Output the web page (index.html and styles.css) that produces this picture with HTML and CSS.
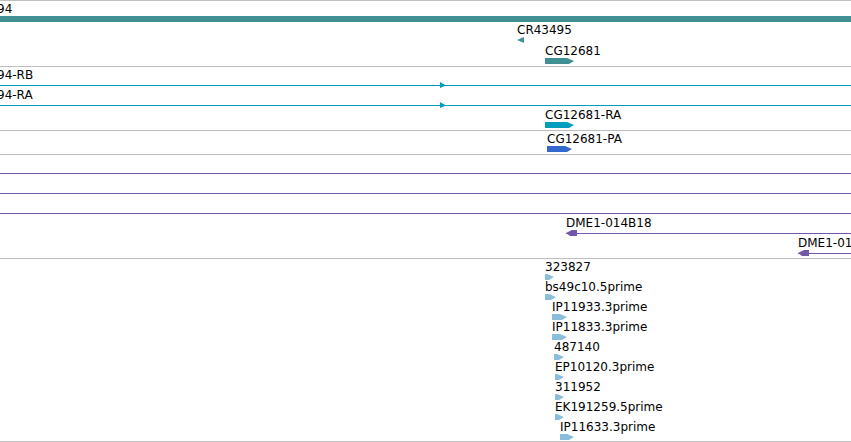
FILE: index.html
```
<!DOCTYPE html>
<html lang="en">
<head>
<meta charset="utf-8">
<title>Genome browser</title>
<link rel="stylesheet" href="styles.css">
</head>
<body>
<main class="browser">
  <section class="track genes">
    <div class="feature" style="--x:-3px"><span class="label">94</span><div class="strip bar"></div></div>
    <div class="feature" style="--x:517px"><span class="label">CR43495</span><div class="strip"><i class="glyph small-left" style="--w:7px"></i></div></div>
    <div class="feature" style="--x:545px"><span class="label">CG12681</span><div class="strip"><i class="glyph right" style="--w:29px"></i></div></div>
  </section>
  <section class="track transcripts">
    <div class="feature" style="--x:-3px"><span class="label">94-RB</span><div class="strip line"><i class="glyph tip" style="--at:443px"></i></div></div>
    <div class="feature" style="--x:-3px"><span class="label">94-RA</span><div class="strip line"><i class="glyph tip" style="--at:443px"></i></div></div>
    <div class="feature" style="--x:545px"><span class="label">CG12681-RA</span><div class="strip"><i class="glyph right" style="--w:29px"></i></div></div>
  </section>
  <section class="track proteins">
    <div class="feature" style="--x:547px"><span class="label">CG12681-PA</span><div class="strip"><i class="glyph right" style="--w:25px"></i></div></div>
  </section>
  <section class="track clones">
    <div class="feature"><span class="label"></span><div class="strip line"></div></div>
    <div class="feature"><span class="label"></span><div class="strip line"></div></div>
    <div class="feature"><span class="label"></span><div class="strip line"></div></div>
    <div class="feature" style="--x:566px"><span class="label">DME1-014B18</span><div class="strip line"><i class="glyph left" style="--w:11px"></i></div></div>
    <div class="feature" style="--x:798px"><span class="label">DME1-014B19</span><div class="strip line"><i class="glyph left" style="--w:11px"></i></div></div>
  </section>
  <section class="track ests">
    <div class="feature" style="--x:545px"><span class="label">323827</span><div class="strip"><i class="glyph right" style="--w:9px"></i></div></div>
    <div class="feature" style="--x:545px"><span class="label">bs49c10.5prime</span><div class="strip"><i class="glyph right" style="--w:11px"></i></div></div>
    <div class="feature" style="--x:552px"><span class="label">IP11933.3prime</span><div class="strip"><i class="glyph right" style="--w:15px"></i></div></div>
    <div class="feature" style="--x:552px"><span class="label">IP11833.3prime</span><div class="strip"><i class="glyph right" style="--w:15px"></i></div></div>
    <div class="feature" style="--x:554px"><span class="label">487140</span><div class="strip"><i class="glyph right" style="--w:10px"></i></div></div>
    <div class="feature" style="--x:555px"><span class="label">EP10120.3prime</span><div class="strip"><i class="glyph right" style="--w:9px"></i></div></div>
    <div class="feature" style="--x:555px"><span class="label">311952</span><div class="strip"><i class="glyph right" style="--w:9px"></i></div></div>
    <div class="feature" style="--x:555px"><span class="label">EK191259.5prime</span><div class="strip"><i class="glyph right" style="--w:9px"></i></div></div>
    <div class="feature" style="--x:560px"><span class="label">IP11633.3prime</span><div class="strip"><i class="glyph right" style="--w:14px"></i></div></div>
  </section>
</main>
</body>
</html>
```
FILE: styles.css
```
body {
  margin: 0;
  background: #fff;
  color: #000;
  font: 12px/14px "DejaVu Sans", sans-serif;
}

.browser {
  overflow: hidden;
}

.track {
  display: flex;
  flex-direction: column;
  padding: 1px 0 2px;
  border-top: 1px solid #bebebe;
}

.genes { color: #408f95; gap: 1px; }
.transcripts { color: #009dbd; }
.proteins { color: #3369cc; }
.clones { color: #7357a8; }
.ests {
  color: #8bbddd;
  padding-bottom: 1px;
  border-bottom: 1px solid #bebebe;
}

.feature {
  margin-left: var(--x, 0);
}

.label {
  display: block;
  height: 14px;
  color: #000;
  white-space: nowrap;
}

.strip {
  display: flex;
  height: 6px;
}

.bar { background: currentColor; }

.line {
  background: linear-gradient(currentColor, currentColor) 0 3px / 100% 1px no-repeat;
}

.glyph {
  width: var(--w);
  height: 6px;
  background: currentColor;
}

.right {
  clip-path: polygon(0 0, calc(100% - 7px) 0, 100% 50%, calc(100% - 5px) 100%, 0 100%);
}

.left {
  clip-path: polygon(100% 0, 6px 0, 0 50%, 4px 100%, 100% 100%);
}

.small-left {
  clip-path: polygon(100% 0, 0 50%, 100% 100%);
}

.tip {
  width: 6px;
  margin-left: var(--at);
  clip-path: polygon(0 0, 100% 60%, 0 100%);
}
```
